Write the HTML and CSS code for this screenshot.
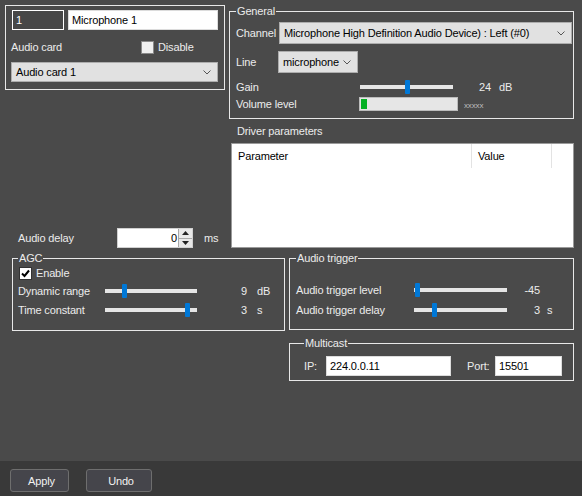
FILE: index.html
```html
<!DOCTYPE html>
<html lang="en">
<head>
  <meta charset="UTF-8" />
  <title>Microphone settings</title>
  <link rel="stylesheet" href="styles.css">
</head>
<body>
  <div class="page">
    <!-- Top area: identity box + general settings -->
    <div class="top-row">
      <div class="left-col">
        <div class="ident-box">
          <div class="ident-row">
            <div class="field num">1</div>
            <div class="field name">Microphone 1</div>
          </div>
          <div class="card-row">
            <span class="card-label">Audio card</span>
            <span class="checkbox"></span>
            <span>Disable</span>
          </div>
          <div class="select card-select">
            <span>Audio card 1</span>
            <svg class="chevron" width="8" height="5" viewBox="0 0 8 5"><polyline points="0.5,0.5 4,4 7.5,0.5" fill="none" stroke="#555" stroke-width="1"/></svg>
          </div>
        </div>

        <div class="delay-row">
          <span class="delay-label">Audio delay</span>
          <div class="spin">
            <span class="spin-value">0</span>
            <div class="spin-buttons">
              <span class="spin-btn"><svg width="7" height="4" viewBox="0 0 7 4"><polygon points="3.5,0 7,4 0,4" fill="#222"/></svg></span>
              <span class="spin-btn"><svg width="7" height="4" viewBox="0 0 7 4"><polygon points="0,0 7,0 3.5,4" fill="#222"/></svg></span>
            </div>
          </div>
          <span class="unit-ms">ms</span>
        </div>
      </div>

      <div class="right-col">
        <fieldset class="group general">
          <legend>General</legend>
          <div class="row channel-row">
            <span class="channel-label">Channel</span>
            <div class="select channel-select">
              <span>Microphone High Definition Audio Device) : Left (#0)</span>
              <svg class="chevron" width="8" height="5" viewBox="0 0 8 5"><polyline points="0.5,0.5 4,4 7.5,0.5" fill="none" stroke="#555" stroke-width="1"/></svg>
            </div>
          </div>
          <div class="row line-row">
            <span class="line-label">Line</span>
            <div class="select line-select">
              <span>microphone</span>
              <svg class="chevron" width="8" height="5" viewBox="0 0 8 5"><polyline points="0.5,0.5 4,4 7.5,0.5" fill="none" stroke="#555" stroke-width="1"/></svg>
            </div>
          </div>
          <div class="row gain-row">
            <span class="gain-label">Gain</span>
            <div class="slider gain-slider"><span class="thumb" style="left: 45px"></span></div>
            <span class="num-value gain-value">24</span>
            <span class="unit">dB</span>
          </div>
          <div class="row volume-row">
            <span class="volume-label">Volume level</span>
            <div class="meter"><span class="meter-fill" style="width: 6px"></span></div>
            <span class="meter-text">xxxxx</span>
          </div>
        </fieldset>

        <div class="driver-label">Driver parameters</div>
        <div class="param-table">
          <div class="param-head">
            <div class="col-param">Parameter</div>
            <div class="col-value">Value</div>
          </div>
        </div>
      </div>
    </div>

    <!-- Bottom area: AGC, trigger, multicast -->
    <div class="bottom-row">
      <fieldset class="group agc">
        <legend>AGC</legend>
        <div class="enable-row">
          <span class="checkbox checked">
            <svg width="11" height="11" viewBox="0 0 11 11"><polyline points="2,5.5 4.5,8 9,2.5" fill="none" stroke="#000" stroke-width="2"/></svg>
          </span>
          <span>Enable</span>
        </div>
        <div class="row agc-row first">
          <span class="agc-label">Dynamic range</span>
          <div class="slider agc-slider"><span class="thumb" style="left: 17px"></span></div>
          <span class="num-value agc-value">9</span>
          <span class="unit agc-unit">dB</span>
        </div>
        <div class="row agc-row">
          <span class="agc-label">Time constant</span>
          <div class="slider agc-slider"><span class="thumb" style="left: 80px"></span></div>
          <span class="num-value agc-value">3</span>
          <span class="unit agc-unit">s</span>
        </div>
      </fieldset>

      <div class="trigger-col">
        <fieldset class="group trigger">
          <legend>Audio trigger</legend>
          <div class="row trigger-row first">
            <span class="trigger-label">Audio trigger level</span>
            <div class="slider trigger-slider"><span class="thumb" style="left: 1px"></span></div>
            <span class="num-value trigger-value">-45</span>
          </div>
          <div class="row trigger-row">
            <span class="trigger-label">Audio trigger delay</span>
            <div class="slider trigger-slider"><span class="thumb" style="left: 18px"></span></div>
            <span class="num-value trigger-value">3</span>
            <span class="unit trigger-unit">s</span>
          </div>
        </fieldset>

        <fieldset class="group multicast">
          <legend>Multicast</legend>
          <div class="row mc-row">
            <span class="ip-label">IP:</span>
            <div class="field ip-field">224.0.0.11</div>
            <span class="port-label">Port:</span>
            <div class="field port-field">15501</div>
          </div>
        </fieldset>
      </div>
    </div>
  </div>

  <div class="footer">
    <button class="btn apply">Apply</button>
    <button class="btn undo">Undo</button>
  </div>
</body>
</html>
```

FILE: styles.css
```css
/* ====== Page ====== */
body {
  margin: 0;
  background: #4a4a4a;
  color: #ececec;
  font-family: "Liberation Sans", Arial, sans-serif;
  font-size: 11px;
  letter-spacing: -0.15px;
}

.page {
  height: 461px;
  box-sizing: border-box;
  padding: 4px 8px 0 5px;
}

.row {
  display: flex;
  align-items: center;
  height: 16px;
}

/* ====== Generic controls ====== */
.field {
  height: 20px;
  box-sizing: border-box;
  border: 1px solid #dcdcdc;
  background: #fff;
  color: #000;
  padding: 0 3px;
  line-height: 18px;
  white-space: nowrap;
}

.select {
  display: flex;
  align-items: center;
  justify-content: space-between;
  box-sizing: border-box;
  background: #e1e1e1;
  border: 1px solid #adadad;
  color: #000;
  padding: 0 6px 0 4px;
  white-space: nowrap;
}

.checkbox {
  display: inline-flex;
  align-items: center;
  justify-content: center;
  width: 13px;
  height: 13px;
  box-sizing: border-box;
  border: 1px solid #8a8a8a;
  background: #f0f0f0;
}
.checkbox.checked {
  background: #fff;
  border-color: #333;
}

.slider {
  position: relative;
  height: 16px;
}
.slider::before {
  content: "";
  position: absolute;
  left: 0;
  right: 0;
  top: 6px;
  height: 4px;
  background: #e6e6e6;
}
.thumb {
  position: absolute;
  top: 1px;
  width: 5px;
  height: 14px;
  background: #0078d7;
  border-radius: 1px;
}

.num-value {
  text-align: right;
}

/* ====== Fieldsets ====== */
.group {
  margin: 0;
  min-width: 0;
  border: 1px solid #e8e8e8;
  box-sizing: border-box;
}
.group legend {
  padding: 0 1px;
  line-height: 14px;
}

/* ====== Top row ====== */
.top-row {
  display: flex;
  gap: 4px;
}

.left-col {
  width: 220px;
  display: flex;
  flex-direction: column;
  justify-content: space-between;
}

.ident-box {
  margin-top: 1px;
  height: 85px;
  box-sizing: border-box;
  border: 1px solid #e8e8e8;
  padding: 4px 5px;
}
.ident-row {
  display: flex;
  gap: 4px;
  margin-left: 1px;
}
.field.num {
  width: 52px;
  background: #474747;
  border-color: #fff;
  color: #fff;
}
.field.name {
  width: 150px;
}
.card-row {
  display: flex;
  align-items: center;
  height: 16px;
  margin-top: 9px;
}
.card-label {
  width: 130px;
}
.card-row .checkbox {
  margin-right: 4px;
}
.card-select {
  margin-top: 7px;
  width: 207px;
  height: 20px;
}

.delay-row {
  display: flex;
  align-items: center;
  height: 20px;
  padding-left: 13px;
}
.delay-label {
  width: 99px;
}
.spin {
  display: flex;
  width: 76px;
  height: 20px;
  box-sizing: border-box;
  border: 1px solid #d0d0d0;
  background: #fff;
  color: #000;
}
.spin-value {
  flex: 1;
  text-align: right;
  line-height: 18px;
  padding-right: 1px;
}
.spin-buttons {
  width: 13px;
  display: flex;
  flex-direction: column;
  border-left: 1px solid #a8a8a8;
}
.spin-btn {
  flex: 1;
  display: flex;
  align-items: center;
  justify-content: center;
  background: #e8e8e8;
}
.spin-btn + .spin-btn {
  border-top: 1px solid #a8a8a8;
}
.unit-ms {
  margin-left: 11px;
}

/* ====== General ====== */
.right-col {
  width: 345px;
}
.general {
  padding: 4px 1px 6px 6px;
}
.channel-row {
  height: 22px;
}
.channel-label {
  width: 43px;
}
.channel-select {
  width: 294px;
  height: 22px;
}
.line-row {
  height: 22px;
  margin-top: 7px;
}
.line-label {
  width: 42px;
}
.line-select {
  width: 80px;
  height: 22px;
}
.gain-row {
  margin-top: 6px;
}
.gain-label {
  width: 124px;
}
.gain-slider {
  width: 93px;
}
.gain-value {
  width: 38px;
}
.unit {
  margin-left: 8px;
}
.volume-row {
  margin-top: 1px;
}
.volume-label {
  width: 123px;
}
.meter {
  display: flex;
  width: 99px;
  height: 14px;
  box-sizing: border-box;
  border: 1px solid #bcbcbc;
  background: #e6e6e6;
  padding: 1px;
}
.meter-fill {
  background: #06b025;
}
.meter-text {
  margin-left: 6px;
  font-size: 8px;
  color: #bdbdbd;
  padding-top: 3px;
}

.driver-label {
  margin-top: 5px;
  height: 14px;
  line-height: 14px;
  padding-left: 8px;
}
.param-table {
  margin: 5px 0 0 2px;
  width: 343px;
  height: 105px;
  box-sizing: border-box;
  border: 1px solid #9a9a9a;
  background: #fff;
  color: #000;
}
.param-head {
  display: flex;
  height: 24px;
  line-height: 24px;
}
.col-param {
  width: 233px;
  padding-left: 6px;
  border-right: 1px solid #e3e3e3;
}
.col-value {
  width: 73px;
  padding-left: 6px;
  border-right: 1px solid #e3e3e3;
}

/* ====== Bottom row ====== */
.bottom-row {
  display: flex;
  gap: 4px;
  margin-top: 3px;
  padding-left: 7px;
}

.agc {
  width: 273px;
  height: 80px;
  padding: 1px 0 10px 5px;
}
.enable-row {
  display: flex;
  align-items: center;
  gap: 4px;
  height: 14px;
  padding-left: 1px;
}
.agc-row {
  margin-top: 3px;
}
.agc-row.first {
  margin-top: 3px;
}
.agc-label {
  width: 87px;
}
.agc-slider {
  width: 92px;
}
.agc-value {
  width: 50px;
}
.agc-unit {
  margin-left: 10px;
}

.trigger-col {
  width: 285px;
}
.trigger {
  height: 79px;
  padding: 17px 0 10px 6px;
}
.trigger-row {
  margin-top: 4px;
}
.trigger-row.first {
  margin-top: 0;
}
.trigger-label {
  width: 118px;
}
.trigger-slider {
  width: 93px;
}
.trigger-value {
  width: 33px;
}
.trigger-unit {
  margin-left: 7px;
}

.multicast {
  margin-top: 6px;
  padding: 6px 0 4px 14px;
}
.mc-row {
  height: 20px;
}
.ip-label {
  width: 22px;
}
.ip-field {
  width: 125px;
}
.port-label {
  margin-left: 16px;
  width: 28px;
}
.port-field {
  width: 67px;
}

/* ====== Footer ====== */
.footer {
  height: 35px;
  box-sizing: border-box;
  background: #393939;
  padding: 8px 0 0 10px;
  display: flex;
  gap: 17px;
}
.btn {
  height: 23px;
  box-sizing: border-box;
  border: 1px solid #6e6e6e;
  border-radius: 3px;
  background: #45454b;
  color: #f2f2f2;
  font-family: "Liberation Sans", Arial, sans-serif;
  font-size: 11px;
  letter-spacing: -0.15px;
  padding: 0 0 0 4px;
}
.btn.apply {
  width: 59px;
}
.btn.undo {
  width: 66px;
}
```
